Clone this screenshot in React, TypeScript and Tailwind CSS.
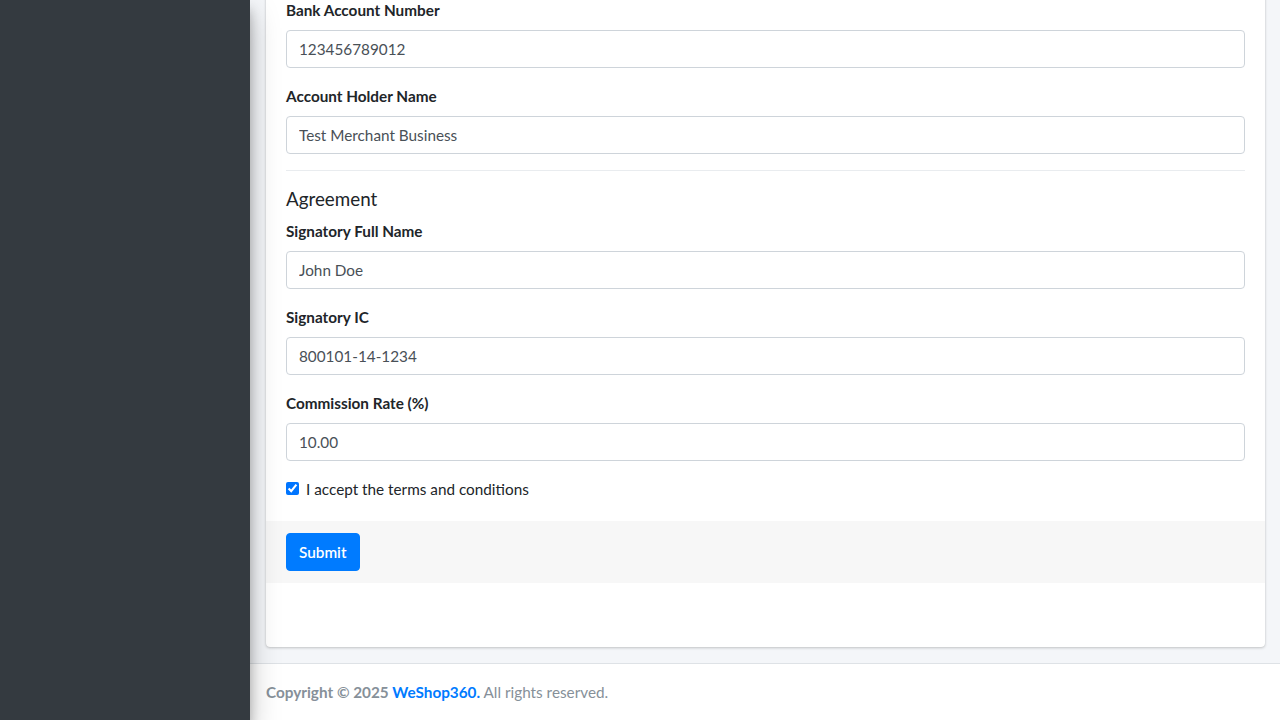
import React from 'react'

const font = { fontFamily: 'Lato, "Noto Sans", sans-serif' }

type FieldProps = { label: string; value: string }

function Field({ label, value }: FieldProps) {
  return (
    <div className="mb-4">
      <label className="block mb-2 text-[15.3px] leading-6 font-bold text-[#212529]">{label}</label>
      <input
        readOnly
        value={value}
        className="block w-full h-[38px] px-3 text-[15.3px] text-[#495057] bg-white border border-[#ced4da] rounded outline-none"
      />
    </div>
  )
}

export default function App() {
  return (
    <div className="flex w-[1280px] h-[720px] overflow-hidden bg-[#f4f6f9]" style={font}>
      <aside className="relative z-10 w-[250px] shrink-0 h-full bg-[#343a40] shadow-[0_14px_28px_rgba(0,0,0,0.25),0_10px_10px_rgba(0,0,0,0.22)]" />

      <div className="flex-1 flex flex-col min-w-0">
        <main className="pl-4 pr-[15px]">
          <div className="-mt-[22px] mb-4 bg-white rounded shadow-[0_0_1px_rgba(0,0,0,0.125),0_1px_3px_rgba(0,0,0,0.2)]">
            <div className="px-5 pt-5 pb-5">
              <Field label="Bank Account Number" value="123456789012" />
              <Field label="Account Holder Name" value="Test Merchant Business" />

              <hr className="mb-4 border-t border-[#e9ecef]" />

              <h5 className="mb-2 text-[18.8px] leading-6 text-[#212529]">Agreement</h5>

              <Field label="Signatory Full Name" value="John Doe" />
              <Field label="Signatory IC" value="800101-14-1234" />
              <Field label="Commission Rate (%)" value="10.00" />

              <label className="flex items-start text-[15.3px] leading-6 text-[#212529]">
                <input type="checkbox" defaultChecked className="w-[13px] h-[13px] mt-[5px] mr-[7px] shrink-0" />
                I accept the terms and conditions
              </label>
            </div>

            <div className="px-5 py-3 bg-[#f7f7f7]">
              <button className="h-[38px] px-3 text-[15.3px] leading-6 font-semibold text-white bg-[#007bff] rounded border border-[#007bff]">
                Submit
              </button>
            </div>

            <div className="h-16" />
          </div>
        </main>

        <footer className="flex-1 px-4 pt-4 bg-white border-t border-[#dee2e6] text-[15.3px] leading-6 text-[#869099]">
          <strong>
            Copyright © 2025 <a className="text-[#007bff]">WeShop360.</a>
          </strong>{' '}
          All rights reserved.
        </footer>
      </div>
    </div>
  )
}
